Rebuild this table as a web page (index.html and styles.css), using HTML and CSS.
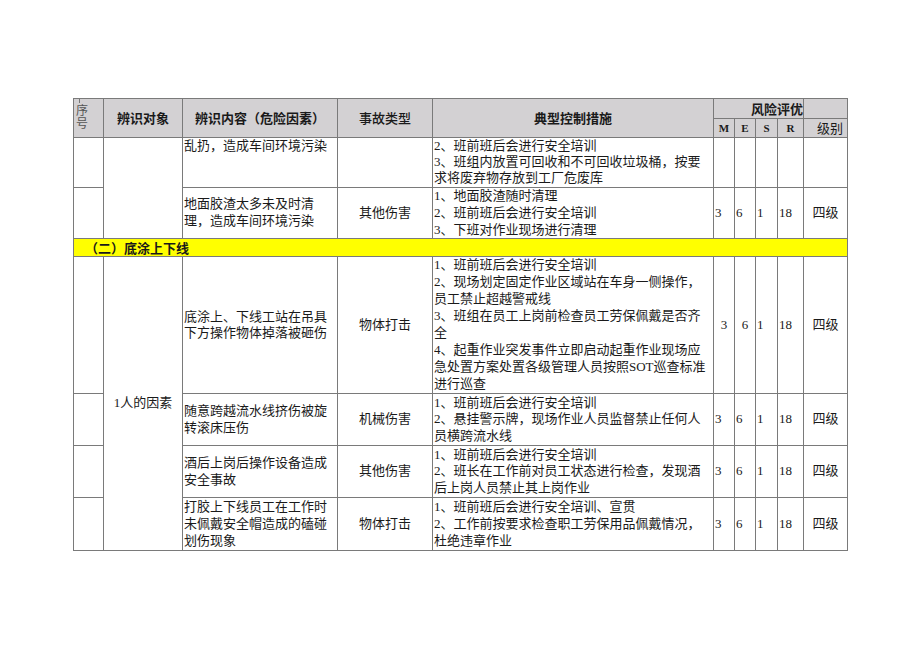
FILE: index.html
```html
<!DOCTYPE html>
<html lang="zh-CN">
<head>
<meta charset="utf-8">
<title>风险辨识</title>
<link rel="stylesheet" href="styles.css">
</head>
<body>
<table class="risk">
  <colgroup>
    <col class="w-no"><col class="w-obj"><col class="w-con"><col class="w-type"><col class="w-ctl">
    <col class="w-m"><col class="w-e"><col class="w-s"><col class="w-r"><col class="w-lv">
  </colgroup>
  <tr class="h1">
    <th rowspan="2" class="no-h"><span class="tick"></span>序<br>号</th>
    <th rowspan="2">辨识对象</th>
    <th rowspan="2">辨识内容（危险因素）</th>
    <th rowspan="2" class="plain">事故类型</th>
    <th rowspan="2">典型控制措施</th>
    <th colspan="4" class="eval">风险评优</th>
    <th></th>
  </tr>
  <tr class="h2">
    <th class="mesr">M</th><th class="mesr">E</th><th class="mesr">S</th><th class="mesr">R</th>
    <th class="lv-h">级别</th>
  </tr>
  <tr class="r1">
    <td></td>
    <td rowspan="2"></td>
    <td class="top">乱扔，造成车间环境污染</td>
    <td></td>
    <td class="top"><div class="clip c1">2、班前班后会进行安全培训<br>3、班组内放置可回收和不可回收垃圾桶，按要求将废弃物存放到工厂危废库</div></td>
    <td></td><td></td><td></td><td></td><td></td>
  </tr>
  <tr class="r2">
    <td></td>
    <td>地面胶渣太多未及时清理，造成车间环境污染</td>
    <td class="ctr">其他伤害</td>
    <td>1、地面胶渣随时清理<br>2、班前班后会进行安全培训<br>3、下班对作业现场进行清理</td>
    <td class="num">3</td><td class="num">6</td><td class="num">1</td><td class="num">18</td><td class="ctr">四级</td>
  </tr>
  <tr class="sec">
    <td colspan="10">（二）底涂上下线</td>
  </tr>
  <tr class="r3">
    <td></td>
    <td rowspan="4" class="ctr">1人的因素</td>
    <td>底涂上、下线工站在吊具下方操作物体掉落被砸伤</td>
    <td class="ctr">物体打击</td>
    <td class="top"><div class="clip c3">1、班前班后会进行安全培训<br>2、现场划定固定作业区域站在车身一侧操作，员工禁止超越警戒线<br>3、班组在员工上岗前检查员工劳保佩戴是否齐全<br>4、起重作业突发事件立即启动起重作业现场应急处置方案处置各级管理人员按照SOT巡查标准进行巡查</div></td>
    <td class="num ctr">3</td><td class="num ctr">6</td><td class="num">1</td><td class="num">18</td><td class="ctr">四级</td>
  </tr>
  <tr class="r4">
    <td></td>
    <td>随意跨越流水线挤伤被旋转滚床压伤</td>
    <td class="ctr">机械伤害</td>
    <td>1、班前班后会进行安全培训<br>2、悬挂警示牌，现场作业人员监督禁止任何人员横跨流水线</td>
    <td class="num">3</td><td class="num">6</td><td class="num">1</td><td class="num">18</td><td class="ctr">四级</td>
  </tr>
  <tr class="r5">
    <td></td>
    <td>酒后上岗后操作设备造成安全事故</td>
    <td class="ctr">其他伤害</td>
    <td>1、班前班后会进行安全培训<br>2、班长在工作前对员工状态进行检查，发现酒后上岗人员禁止其上岗作业</td>
    <td class="num">3</td><td class="num">6</td><td class="num">1</td><td class="num">18</td><td class="ctr">四级</td>
  </tr>
  <tr class="r6">
    <td></td>
    <td>打胶上下线员工在工作时未佩戴安全帽造成的磕碰划伤现象</td>
    <td class="ctr">物体打击</td>
    <td>1、班前班后会进行安全培训、宣贯<br>2、工作前按要求检查职工劳保用品佩戴情况，杜绝违章作业</td>
    <td class="num">3</td><td class="num">6</td><td class="num">1</td><td class="num">18</td><td class="ctr">四级</td>
  </tr>
</table>
</body>
</html>
```

FILE: styles.css
```css
html, body {
  margin: 0;
  padding: 0;
  background: #ffffff;
}

body {
  padding: 98px 0 0 73px;
  font-family: "Liberation Serif", "Noto Sans CJK SC", serif;
  color: #1a1a1a;
}

.risk {
  border-collapse: collapse;
  table-layout: fixed;
  width: 775px;
  font-size: 13px;
  line-height: 16.8px;
}

.w-no { width: 30px; }
.w-obj { width: 79px; }
.w-con { width: 155px; }
.w-type { width: 95px; }
.w-ctl { width: 281px; }
.w-m { width: 21px; }
.w-e { width: 21px; }
.w-s { width: 22px; }
.w-r { width: 26px; }
.w-lv { width: 44px; }

.risk th,
.risk td {
  border: 1px solid #7a7a7a;
  padding: 0 1px;
  vertical-align: middle;
  text-align: left;
  overflow: hidden;
  word-break: normal;
}

.risk th {
  background: #d3d1d3;
  font-family: "Noto Sans CJK SC", sans-serif;
  font-weight: 700;
  text-align: center;
  color: #1a1a1a;
  line-height: 14px;
}

.risk .no-h {
  position: relative;
  text-align: left;
  font-family: "Liberation Serif", "Noto Sans CJK SC", serif;
  font-weight: 400;
  font-size: 12px;
  color: #555;
  line-height: 13.5px;
  padding-left: 2px;
}

.tick {
  position: absolute;
  left: 5px;
  top: 0;
  width: 1px;
  height: 4px;
  background: #777;
}

.risk .plain {
  font-weight: 500;
}

.risk .eval {
  text-align: right;
  padding-right: 0;
}

.risk .mesr {
  font-family: "Liberation Serif", serif;
  font-size: 11px;
  font-weight: 700;
}

.risk .lv-h {
  font-weight: 400;
  padding-left: 10px;
}

.h1 { height: 20px; }
.h2 { height: 19px; }
.r1 { height: 50px; }
.r2 { height: 51px; }
.sec { height: 18px; }
.r3 { height: 137px; }
.r4 { height: 52px; }
.r5 { height: 52px; }
.r6 { height: 53px; }

.risk td.top {
  vertical-align: top;
}

.risk td.ctr {
  text-align: center;
}

.clip {
  overflow: hidden;
}

.clip.c1 {
  height: 48px;
  line-height: 16px;
}

.clip.c3 {
  height: 135px;
  line-height: 16.9px;
}

.sec td {
  background: #ffff00;
  font-family: "Noto Sans CJK SC", sans-serif;
  font-weight: 700;
  padding-left: 11px;
  line-height: 15px;
}
```
